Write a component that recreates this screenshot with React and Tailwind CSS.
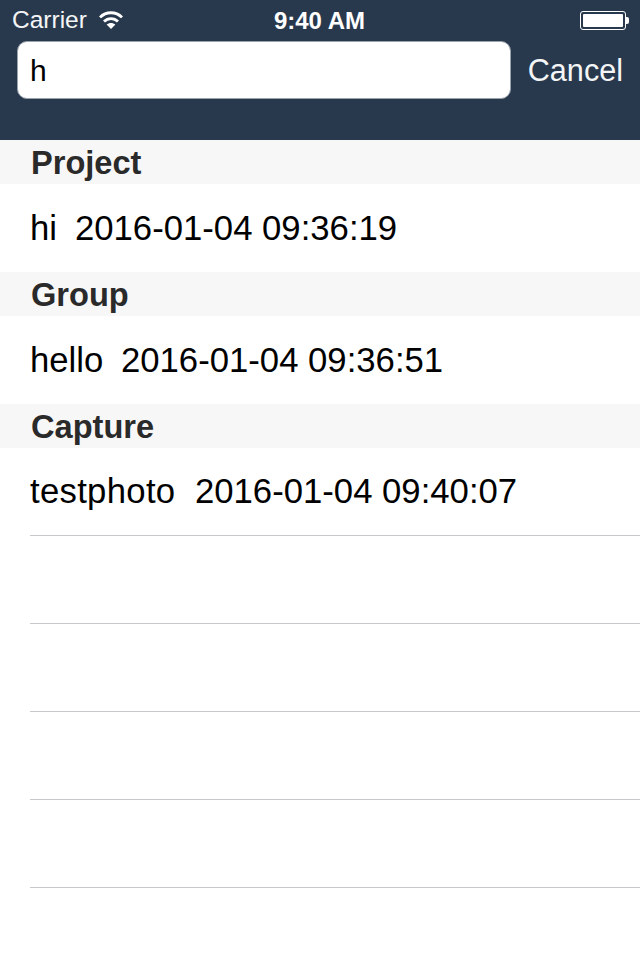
const sections = [
  { title: "Project", name: "hi", date: "2016-01-04 09:36:19", nameBox: "w-[45px]" },
  { title: "Group", name: "hello", date: "2016-01-04 09:36:51", nameBox: "w-[91px]" },
  { title: "Capture", name: "testphoto", date: "2016-01-04 09:40:07", nameBox: "w-[165px]" },
];

function WifiIcon() {
  return (
    <svg width="24" height="18" viewBox="0 0 24 18" fill="none" stroke="#fff" strokeWidth="2.8">
      <path d="M1 6.4C7 0.2 17 0.2 23 6.4" />
      <path d="M5 10.6C9 6.6 15 6.6 19 10.6" />
      <path d="M12 18L7.6 13.6C10.2 11.4 13.8 11.4 16.4 13.6Z" fill="#fff" stroke="none" />
    </svg>
  );
}

function Battery() {
  return (
    <div className="flex items-center">
      <div className="h-[19px] w-[46px] rounded-[3px] border border-white p-[2px]">
        <div className="h-full w-full rounded-[1px] bg-white" />
      </div>
      <div className="h-[7px] w-[3px] rounded-r-[2px] bg-white" />
    </div>
  );
}

function StatusBar() {
  return (
    <div className="grid h-[41px] grid-cols-3 items-center pl-3 pr-[11px] text-[24px] text-white">
      <div className="flex items-center gap-[12px] pb-[1px]">
        <span className="text-[24.5px] text-[#f4f5f6]">Carrier</span>
        <WifiIcon />
      </div>
      <div className="pr-[2px] text-center font-bold whitespace-nowrap">9:40 AM</div>
      <div className="flex justify-end pb-[1px]">
        <Battery />
      </div>
    </div>
  );
}

function Row({ children, line }) {
  return (
    <div className="h-[88px] pl-[30px]">
      <div className={`flex h-full items-center text-[34.7px] text-black ${line ? "border-b border-[#c8c7cc]" : ""}`}>
        {children}
      </div>
    </div>
  );
}

export default function App() {
  return (
    <div className="min-h-[960px] w-[640px] overflow-hidden bg-white font-['Liberation_Sans',sans-serif]">
      <div className="h-[140px] bg-[#29394d]">
        <StatusBar />
        <div className="flex items-center pl-[17px] pr-[17px]">
          <div className="flex h-[58px] w-[494px] items-center rounded-[10px] border border-[#9aa3ad] bg-white pl-[12px] text-[30px] text-black">
            h
          </div>
          <div className="ml-[17px] pt-[2px] text-[30.6px] text-[#f4f5f6]">Cancel</div>
        </div>
      </div>
      {sections.map((s, i) => (
        <div key={s.title}>
          <div className="flex h-[44px] items-center bg-[#f7f7f7] pt-[3px] pl-[31px] text-[32.6px] font-bold text-[#2a2a2a]">
            {s.title}
          </div>
          <Row line={i === 2}>
            <span className={`${s.nameBox} ${s.name === "testphoto" ? "tracking-[0.3px]" : ""}`}>{s.name}</span>
            <span>{s.date}</span>
          </Row>
        </div>
      ))}
      {[0, 1, 2, 3].map((n) => (
        <Row key={n} line />
      ))}
    </div>
  );
}
